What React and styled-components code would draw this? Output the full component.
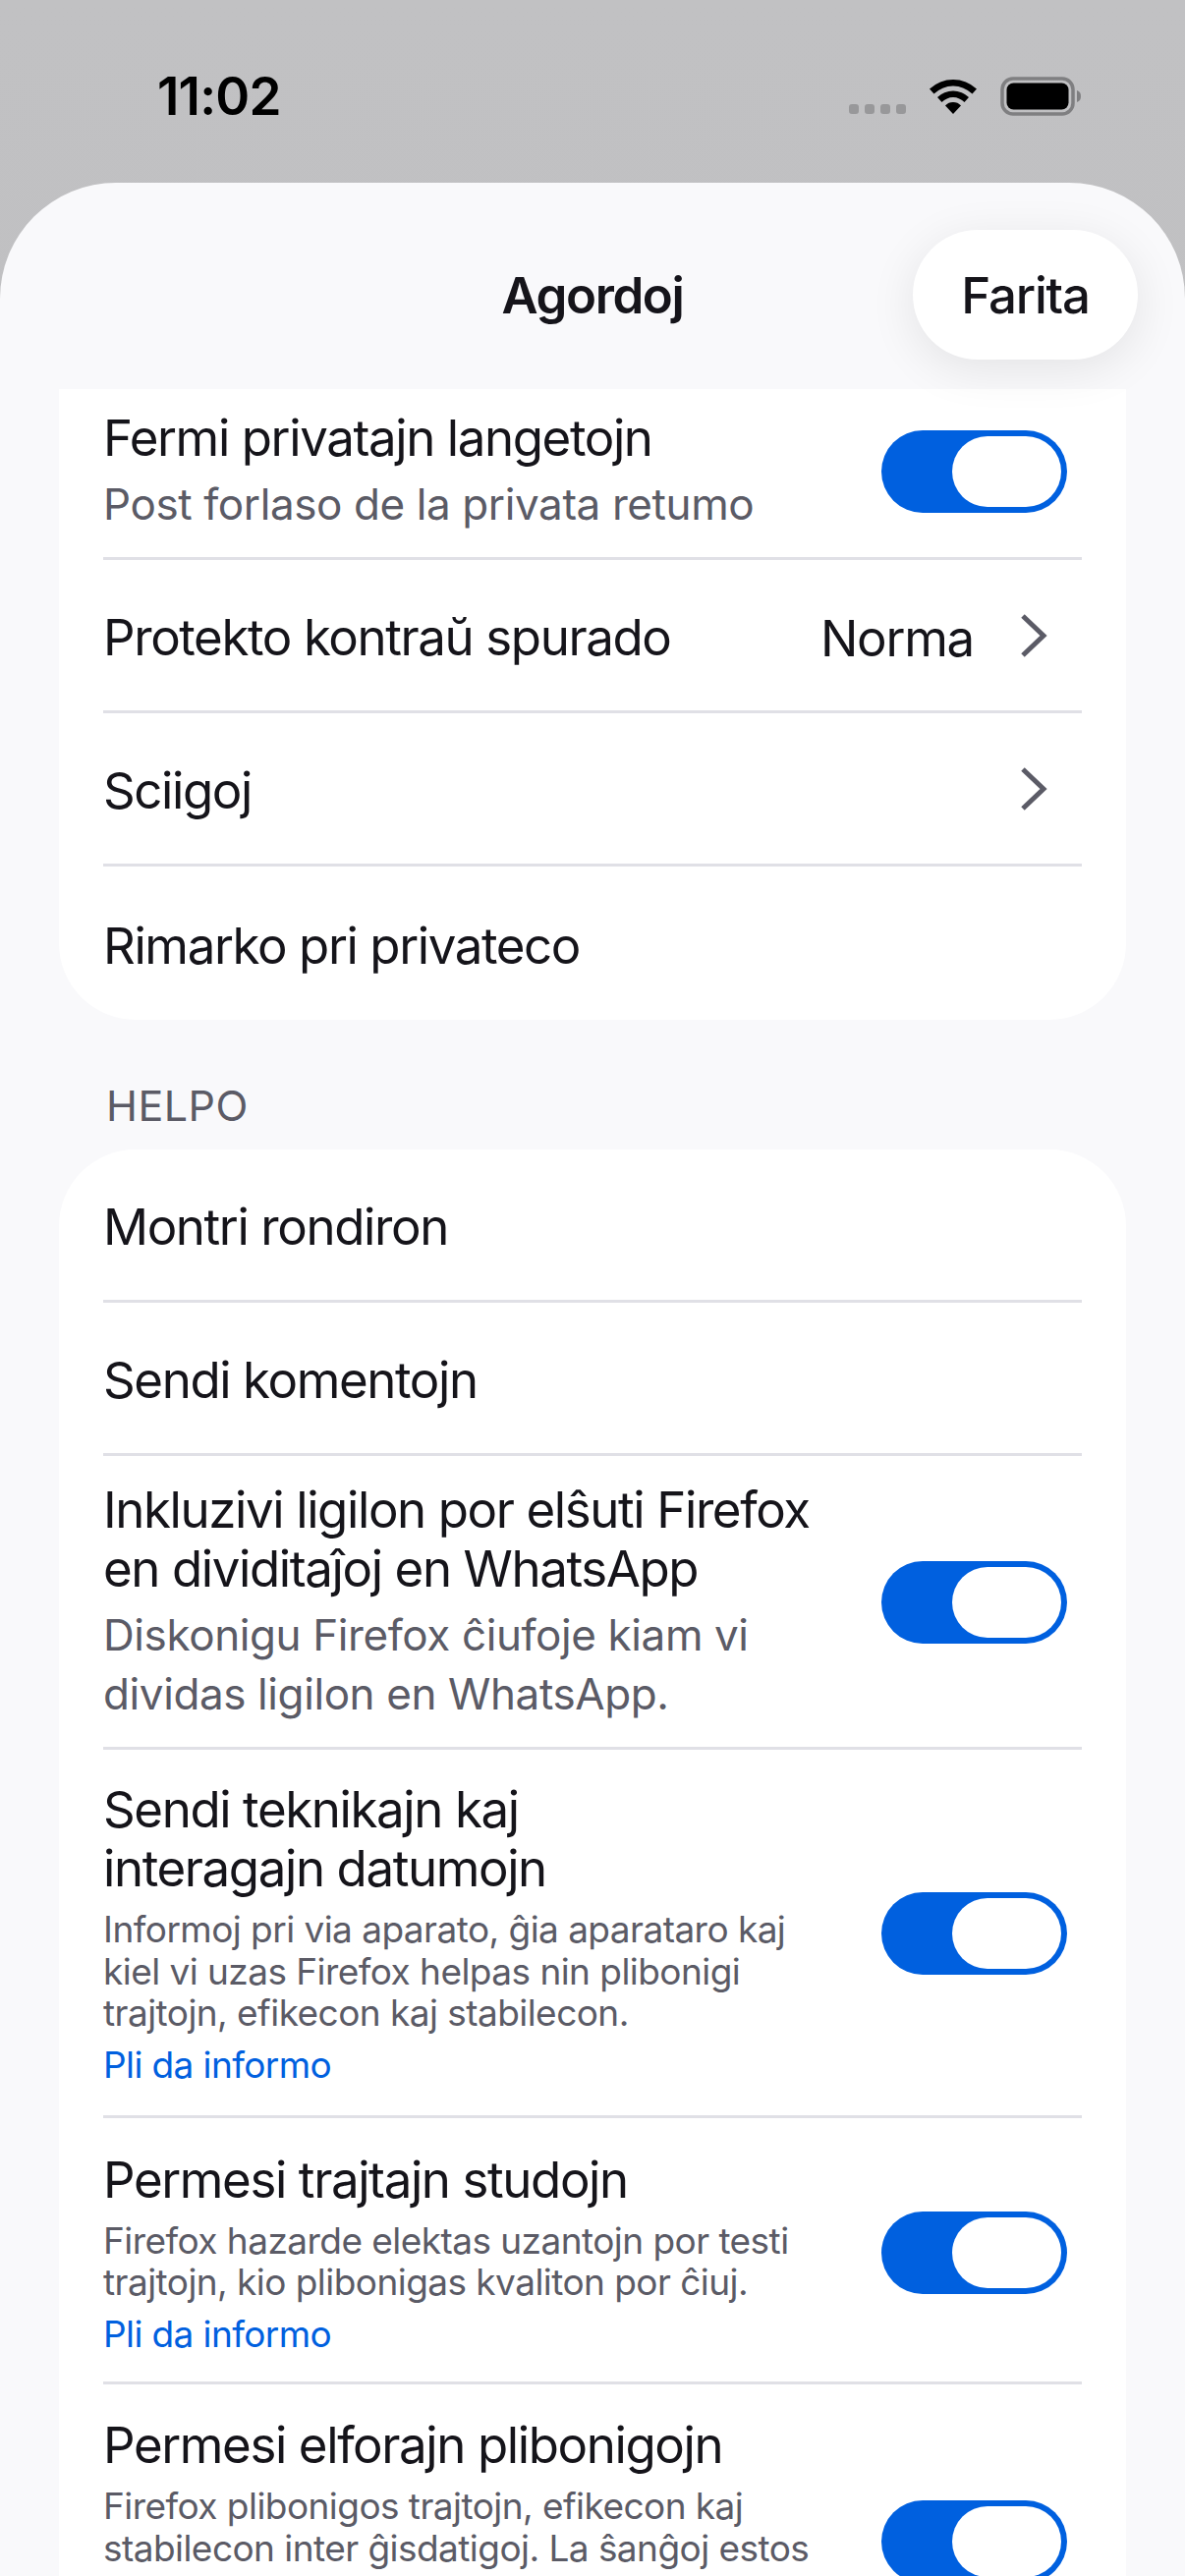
import styled, { createGlobalStyle } from "styled-components";

const GlobalStyle = createGlobalStyle`
  html, body {
    margin: 0;
    padding: 0;
    background: #c0c0c2;
  }
  * { box-sizing: border-box; }
`;

const Page = styled.div`
  width: 1206px;
  height: 2622px;
  overflow: hidden;
  background: linear-gradient(#c1c1c3, #bbbbbd);
  font-family: Inter, "Noto Sans", sans-serif;
  color: #15141a;
`;

const StatusBar = styled.div`
  height: 186px;
  display: flex;
  align-items: flex-start;
  justify-content: space-between;
  padding: 68px 104px 0 160px;
`;

const Time = styled.div`
  font-size: 53px;
  line-height: 60px;
  font-weight: 600;
  letter-spacing: -0.8px;
  color: #000;
`;

const StatusIcons = styled.div`
  display: flex;
  align-items: flex-start;
  padding-top: 10px;
  gap: 22px;
`;

const SignalDots = styled.div`
  display: flex;
  gap: 6px;
  margin-top: 28px;
`;

const Dot = styled.span`
  width: 10px;
  height: 10px;
  border-radius: 3px;
  background: #98989a;
`;

const Sheet = styled.div`
  height: 2436px;
  background: #f9f9fb;
  border-radius: 118px 118px 0 0;
`;

const Header = styled.div`
  position: relative;
  z-index: 2;
  height: 210px;
  display: grid;
  grid-template-columns: 1fr auto 1fr;
  align-items: center;
  padding: 48px 48px 30px;
`;

const Title = styled.div`
  font-size: 51px;
  font-weight: 600;
  letter-spacing: -1.4px;
`;

const DoneButton = styled.div`
  justify-self: end;
  width: 229px;
  height: 132px;
  border-radius: 66px;
  background: #fff;
  display: flex;
  align-items: center;
  justify-content: center;
  font-size: 51px;
  font-weight: 500;
  letter-spacing: -1.2px;
  box-shadow: 0 10px 48px rgba(0, 0, 0, 0.09);
`;

const Card = styled.div`
  margin: 0 60px;
  padding: 0 45px;
  background: #fff;
  border-radius: ${(p) => (p.$cut ? "0 0 78px 78px" : "78px")};
`;

const SectionLabel = styled.div`
  margin: 58px 0 0 108px;
  height: 74px;
  font-size: 43px;
  line-height: 58px;
  letter-spacing: 0.5px;
  color: #5b5b66;
`;

const Row = styled.div`
  display: flex;
  align-items: center;
  min-height: ${(p) => p.$height || 156}px;
  padding: ${(p) => p.$top ?? 32}px 15px ${(p) => p.$bottom ?? 27}px 0;
  border-bottom: ${(p) => (p.$last ? "none" : "3px solid #e0e0e6")};
`;

const RowText = styled.div`
  flex: 1;
  min-width: 0;
  align-self: ${(p) => (p.$pinned ? "flex-start" : "auto")};
`;

const RowTitle = styled.div`
  font-size: 51px;
  line-height: 60px;
  letter-spacing: -1.4px;
  white-space: pre-line;
`;

const RowSub = styled.div`
  margin-top: 7px;
  font-size: 44px;
  line-height: 60px;
  letter-spacing: -0.4px;
  color: #5b5b66;
  white-space: pre-line;
`;

const RowNote = styled.div`
  margin-top: 11px;
  font-size: 37px;
  line-height: 42.6px;
  letter-spacing: -0.55px;
  color: #5b5b66;
  white-space: pre-line;
`;

const MoreLink = styled.div`
  margin-top: 9px;
  font-size: 37px;
  line-height: 44px;
  letter-spacing: -0.6px;
  color: #0060df;
`;

const Value = styled.div`
  font-size: 51px;
  letter-spacing: -1.25px;
  margin-right: 45px;
`;

const ToggleTrack = styled.div`
  flex: none;
  width: 189px;
  height: 84px;
  padding: 6px;
  border-radius: 42px;
  background: #0060df;
  display: flex;
  justify-content: flex-end;
`;

const ToggleThumb = styled.div`
  width: 111px;
  height: 72px;
  border-radius: 36px;
  background: #fff;
`;

const Toggle = () => (
  <ToggleTrack>
    <ToggleThumb />
  </ToggleTrack>
);

const ChevronBox = styled.svg`
  flex: none;
  width: 30px;
  height: 46px;
  margin: 0 20px 5px 0;
`;

const Chevron = () => (
  <ChevronBox viewBox="0 0 30 46" fill="none">
    <path d="M5 3 L26 23 L5 43" stroke="#5b5b66" strokeWidth="5" />
  </ChevronBox>
);

const Wifi = () => (
  <svg width="52" height="38" viewBox="0 0 52 38" fill="none">
    <path d="M2 12.5 A35 35 0 0 1 50 12.5 L45.5 17.5 A28 28 0 0 0 6.5 17.5 Z" fill="#000" />
    <path d="M10 21 A23 23 0 0 1 42 21 L37.5 26 A16 16 0 0 0 14.5 26 Z" fill="#000" />
    <path d="M18 29.5 A11 11 0 0 1 34 29.5 L26 38 Z" fill="#000" />
  </svg>
);

const Battery = () => (
  <svg width="84" height="40" viewBox="0 0 84 40" fill="none">
    <rect x="2" y="2" width="72" height="36" rx="11" stroke="#7f7f81" strokeWidth="3.5" />
    <rect x="6.5" y="6.5" width="63" height="27" rx="7" fill="#000" />
    <path d="M78 14 C81 15 82 17 82 20 C82 23 81 25 78 26 Z" fill="#7f7f81" />
  </svg>
);

export default function App() {
  return (
    <Page>
      <GlobalStyle />
      <StatusBar>
        <Time>11:02</Time>
        <StatusIcons>
          <SignalDots>
            <Dot />
            <Dot />
            <Dot />
            <Dot />
          </SignalDots>
          <Wifi />
          <Battery />
        </StatusIcons>
      </StatusBar>
      <Sheet>
        <Header>
          <span />
          <Title>Agordoj</Title>
          <DoneButton>Farita</DoneButton>
        </Header>

        <Card $cut>
          <Row $height={174} $top={0} $bottom={4}>
            <RowText>
              <RowTitle>Fermi privatajn langetojn</RowTitle>
              <RowSub>Post forlaso de la privata retumo</RowSub>
            </RowText>
            <Toggle />
          </Row>
          <Row>
            <RowText>
              <RowTitle>Protekto kontraŭ spurado</RowTitle>
            </RowText>
            <Value>Norma</Value>
            <Chevron />
          </Row>
          <Row>
            <RowText>
              <RowTitle>Sciigoj</RowTitle>
            </RowText>
            <Chevron />
          </Row>
          <Row $last>
            <RowText>
              <RowTitle>Rimarko pri privateco</RowTitle>
            </RowText>
          </Row>
        </Card>

        <SectionLabel>HELPO</SectionLabel>

        <Card>
          <Row>
            <RowText>
              <RowTitle>Montri rondiron</RowTitle>
            </RowText>
          </Row>
          <Row>
            <RowText>
              <RowTitle>Sendi komentojn</RowTitle>
            </RowText>
          </Row>
          <Row $top={25} $bottom={24}>
            <RowText>
              <RowTitle>{"Inkluzivi ligilon por elŝuti Firefox\nen dividitaĵoj en WhatsApp"}</RowTitle>
              <RowSub>{"Diskonigu Firefox ĉiufoje kiam vi\ndividas ligilon en WhatsApp."}</RowSub>
            </RowText>
            <Toggle />
          </Row>
          <Row $top={31} $bottom={29}>
            <RowText>
              <RowTitle>{"Sendi teknikajn kaj\ninteragajn datumojn"}</RowTitle>
              <RowNote>{"Informoj pri via aparato, ĝia aparataro kaj\nkiel vi uzas Firefox helpas nin plibonigi\ntrajtojn, efikecon kaj stabilecon."}</RowNote>
              <MoreLink>Pli da informo</MoreLink>
            </RowText>
            <Toggle />
          </Row>
          <Row $top={33} $bottom={26}>
            <RowText>
              <RowTitle>Permesi trajtajn studojn</RowTitle>
              <RowNote>{"Firefox hazarde elektas uzantojn por testi\ntrajtojn, kio plibonigas kvaliton por ĉiuj."}</RowNote>
              <MoreLink>Pli da informo</MoreLink>
            </RowText>
            <Toggle />
          </Row>
          <Row $last $height={316}>
            <RowText $pinned>
              <RowTitle>Permesi elforajn plibonigojn</RowTitle>
              <RowNote>{"Firefox plibonigos trajtojn, efikecon kaj\nstabilecon inter ĝisdatigoj. La ŝanĝoj estos"}</RowNote>
            </RowText>
            <Toggle />
          </Row>
        </Card>
      </Sheet>
    </Page>
  );
}
